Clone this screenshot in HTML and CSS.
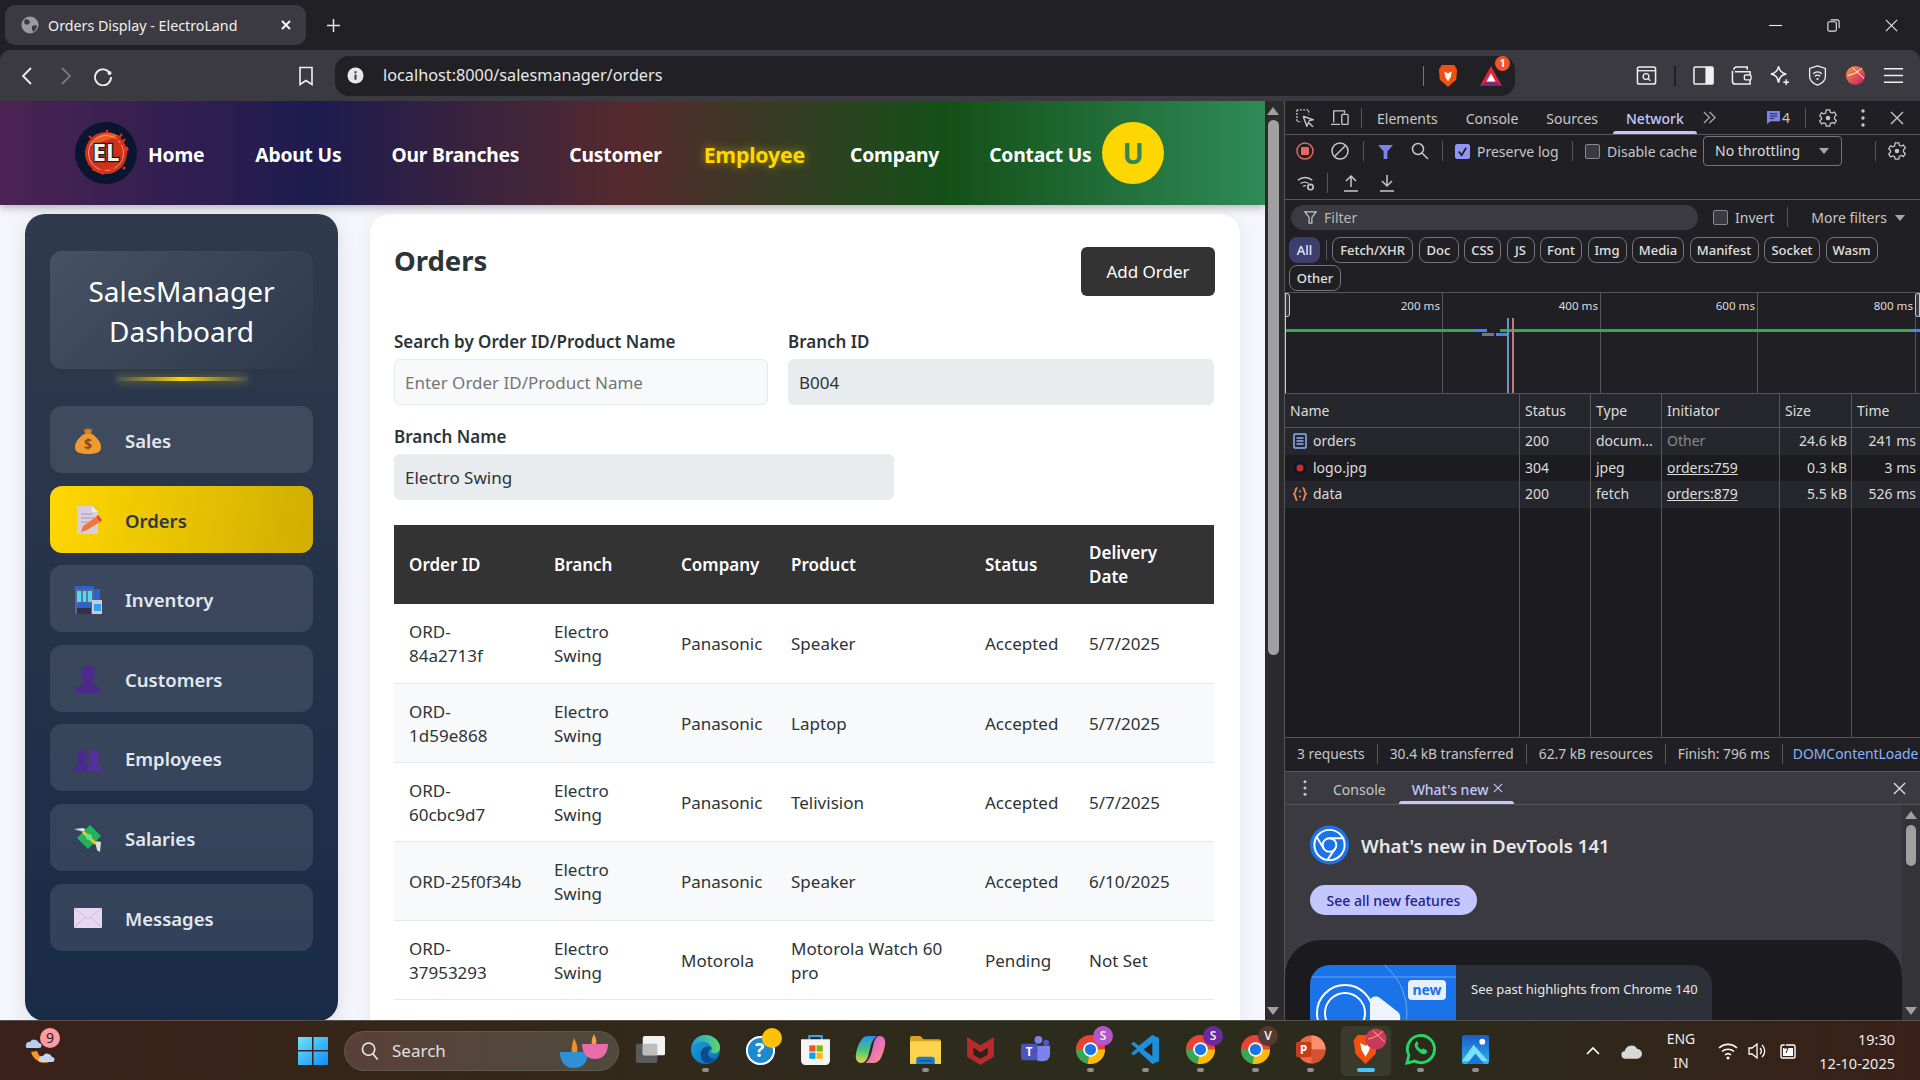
FILE: index.html
```html
<!DOCTYPE html>
<html lang="en">
<head>
    <meta charset="UTF-8">
    <title>Orders Display - ElectroLand</title>
    <link rel="stylesheet" href="styles.css">
</head>
<body>
<div class="tabstrip">
    <div class="tab">
        <svg class="tab-globe" viewBox="0 0 18 18"><circle cx="9" cy="9" r="8.5" fill="#9a9aa0"/><path d="M4 3l4 1 1 3-3 2-3-2zM11 10l4-1 1 2-3 5-2-2z" fill="#3a3a40"/></svg>
        <span class="tab-title">Orders Display - ElectroLand</span>
        <svg class="tab-close" viewBox="0 0 12 12"><path d="M2 2l8 8M10 2l-8 8" stroke="#fff" stroke-width="1.8"/></svg>
    </div>
    <svg class="new-tab" viewBox="0 0 16 16"><path d="M8 1v14M1 8h14" stroke="#e8e8e8" stroke-width="1.6"/></svg>
    <div class="window-controls">
        <svg viewBox="0 0 16 16"><path d="M1 8h14" stroke="#e8e8e8" stroke-width="1.2"/></svg>
        <svg viewBox="0 0 16 16"><rect x="2" y="4" width="9" height="10" rx="1.5" fill="none" stroke="#e8e8e8" stroke-width="1.2"/><path d="M5 2h7a2 2 0 0 1 2 2v7" fill="none" stroke="#e8e8e8" stroke-width="1.2"/></svg>
        <svg viewBox="0 0 16 16"><path d="M2 2l12 12M14 2L2 14" stroke="#e8e8e8" stroke-width="1.2"/></svg>
    </div>
</div>

<div class="toolbar">
    <button class="tool-btn"><svg viewBox="0 0 20 20"><path d="M14 2L6 10l8 8" fill="none" stroke="#f0f0f0" stroke-width="1.8"/></svg></button>
    <button class="tool-btn"><svg viewBox="0 0 20 20"><path d="M7 2l8 8-8 8" fill="none" stroke="#77777c" stroke-width="1.8"/></svg></button>
    <button class="tool-btn"><svg viewBox="0 0 20 20"><path d="M15.5 5.5A8 8 0 1 0 18 11" fill="none" stroke="#f0f0f0" stroke-width="1.8"/><circle cx="16.5" cy="7" r="2" fill="#f0f0f0"/></svg></button>
    <button class="tool-btn bookmark"><svg viewBox="0 0 20 20"><path d="M4 1.5h12v17l-6-4-6 4z" fill="none" stroke="#f0f0f0" stroke-width="1.6"/></svg></button>
    <div class="address-bar">
        <svg class="info-icon" viewBox="0 0 18 18"><circle cx="9" cy="9" r="8.5" fill="#e8e8ec"/><path d="M9 8v5.5M9 4.5v2" stroke="#333" stroke-width="2"/></svg>
        <span class="url">localhost:8000/salesmanager/orders</span>
        <span class="addr-sep"></span>
        <svg class="shield-icon" viewBox="0 0 22 26"><path d="M4 1h14l3 5-1 11-9 8-9-8L1 6z" fill="#f1500f"/><path d="M7 8l4 2 4-2-1 6-3 5-3-5z" fill="#fff"/></svg>
        <span class="bat-wrap">
            <svg class="bat-icon" viewBox="0 0 26 24"><path d="M13 1l12 22H1z" fill="#e0243a"/><path d="M1 23l6-4h12l6 4z" fill="#662d91"/><path d="M13 9l5 9H8z" fill="#fff"/></svg>
            <span class="bat-badge">1</span>
        </span>
    </div>
    <div class="toolbar-right">
        <svg viewBox="0 0 22 22"><rect x="1.5" y="2" width="19" height="18" rx="2" fill="none" stroke="#f0f0f0" stroke-width="1.6"/><path d="M1.5 6h19" stroke="#f0f0f0" stroke-width="1.4"/><circle cx="10.5" cy="12" r="3" fill="none" stroke="#f0f0f0" stroke-width="1.4"/><path d="M12.5 14l2.5 2.5" stroke="#f0f0f0" stroke-width="1.4"/></svg>
        <span class="toolbar-sep"></span>
        <svg viewBox="0 0 22 22"><rect x="1" y="2" width="20" height="18" rx="1.5" fill="none" stroke="#f0f0f0" stroke-width="1.6"/><rect x="13" y="2" width="8" height="18" fill="#f0f0f0"/></svg>
        <svg viewBox="0 0 22 22"><path d="M3 5a3 3 0 0 1 3-3h11v3M1.5 6v11a3 3 0 0 0 3 3H20V7H4" fill="none" stroke="#f0f0f0" stroke-width="1.6"/><rect x="14" y="10.5" width="7" height="5" rx="1" fill="#3a3a40" stroke="#f0f0f0" stroke-width="1.4"/></svg>
        <svg viewBox="0 0 22 22"><path d="M10 1.5c1 5 3 7 8 8-5 1-7 3-8 9-1-6-3-8-8-9 5-1 7-3 8-8z" fill="none" stroke="#f0f0f0" stroke-width="1.6"/><path d="M18 15v6M15 18h6" stroke="#f0f0f0" stroke-width="1.5"/></svg>
        <svg viewBox="0 0 22 24"><path d="M11 1l9 3v9c0 5-4 8-9 10-5-2-9-5-9-10V4z" fill="none" stroke="#f0f0f0" stroke-width="1.5"/><path d="M6 10a7 7 0 0 1 10 0M8 13a4 4 0 0 1 6 0" fill="none" stroke="#f0f0f0" stroke-width="1.4"/><circle cx="11" cy="16" r="1.2" fill="#f0f0f0"/></svg>
        <svg viewBox="0 0 22 22"><defs><linearGradient id="orb" x1="0" y1="0" x2="1" y2="1"><stop offset="0" stop-color="#f5a044"/><stop offset="1" stop-color="#c8145e"/></linearGradient></defs><circle cx="11" cy="11" r="10" fill="url(#orb)"/><path d="M3 11c6-1 11-4 15-8M8 3l12 11" stroke="#fff" stroke-width="1" fill="none"/></svg>
        <svg viewBox="0 0 22 22"><path d="M1 4h20M1 11h20M1 18h20" stroke="#f0f0f0" stroke-width="1.6"/></svg>
    </div>
</div>

<div class="workspace">
    <div class="page">
        <header class="site-header">
            <div class="site-logo">
                <svg viewBox="0 0 62 62">
                    <circle cx="31" cy="31" r="31" fill="#0a1530"/>
                    <circle cx="31" cy="31" r="21" fill="#d1301a"/>
                    <path d="M14 24a21 21 0 0 1 30-10z" fill="#ef5a22"/>
                    <circle cx="31" cy="31" r="17.5" fill="none" stroke="#e8a080" stroke-width="1"/>
                    <path d="M17 47l12 5M24 49l12-3M36 48l11-12M47 12l-6 7M50 17l-5 6M14 14l5 4" stroke="#e03018" stroke-width="2"/>
                    <circle cx="51" cy="27" r="2.5" fill="#e8341c"/>
                    <circle cx="49" cy="46" r="1.5" fill="#e8341c"/>
                    <circle cx="32" cy="9" r="1.2" fill="#e8341c"/>
                    <text x="31" y="39" text-anchor="middle" class="logo-text">EL</text>
                </svg>
            </div>
            <nav class="site-nav">
                <a class="nav-home">Home</a>
                <a class="nav-about">About Us</a>
                <a class="nav-branches">Our Branches</a>
                <a class="nav-customer">Customer</a>
                <a class="nav-employee">Employee</a>
                <a class="nav-company">Company</a>
                <a class="nav-contact">Contact Us</a>
            </nav>
            <div class="avatar">U</div>
        </header>

        <div class="page-body">
            <aside class="sidebar">
                <div class="sidebar-title">SalesManager Dashboard</div>
                <div class="sidebar-glow"></div>
                <ul class="side-menu">
                    <li class="side-item">
                        <svg class="side-icon" viewBox="0 0 28 28"><path d="M10 1l2 2 2-2 2 2 2-2-1 6h-6z" fill="#d9822b"/><path d="M10 7h8c6 4 9 9 9 13 0 5-4 7-13 7S1 25 1 20c0-4 3-9 9-13z" fill="#ef9a2e"/><text x="14" y="22" text-anchor="middle" class="bag-text">$</text></svg>
                        <span>Sales</span>
                    </li>
                    <li class="side-item active">
                        <svg class="side-icon" viewBox="0 0 28 28"><path d="M3 0h15l6 6v22H3z" fill="#d9cde0"/><path d="M18 0l6 6h-6z" fill="#f0e8f4"/><path d="M7 8h11M7 12h13M7 16h8" stroke="#a59bb0" stroke-width="1.2"/><path d="M7 26l2-6 13-9 4 5-13 8z" fill="#f2753a"/><path d="M22 11l4 5 2-2-4-5z" fill="#e2453a"/></svg>
                        <span>Orders</span>
                    </li>
                    <li class="side-item">
                        <svg class="side-icon" viewBox="0 0 28 28"><rect x="1" y="1" width="19" height="27" fill="#5a6890"/><rect x="1" y="0" width="19" height="3" fill="#2a64c8"/><rect x="3" y="5" width="15" height="11" fill="#58d8f0"/><path d="M8 5v11M13 5v11" stroke="#4a5a80" stroke-width="1.4"/><rect x="20" y="3" width="6" height="12" fill="#2a64c8"/><rect x="18" y="14" width="10" height="14" fill="#c8ccd8"/><rect x="20" y="18" width="7" height="7" fill="#35a0f0"/><path d="M2 22a8 6 0 0 1 16 0z" fill="#2a64c8"/><rect x="3" y="22" width="14" height="6" fill="#35304a"/></svg>
                        <span>Inventory</span>
                    </li>
                    <li class="side-item">
                        <svg class="side-icon" viewBox="0 0 28 28"><ellipse cx="14" cy="9" rx="7" ry="9" fill="#4c2a8c"/><path d="M10 16h8l1 3c5 2 8 5 9 9H0c1-4 4-7 9-9z" fill="#4c2a8c"/></svg>
                        <span>Customers</span>
                    </li>
                    <li class="side-item">
                        <svg class="side-icon" viewBox="0 0 28 28"><ellipse cx="8" cy="11" rx="5" ry="7" fill="#4c2a8c"/><path d="M5 17h6l1 2c2 1 3 3 3 5v2H0v-2c0-2 2-4 4-5z" fill="#4c2a8c"/><ellipse cx="20" cy="11" rx="5" ry="7" fill="#56309a"/><path d="M17 17h6l1 2c2 1 4 3 4 5v2H13v-2c0-2 1-4 3-5z" fill="#56309a"/></svg>
                        <span>Employees</span>
                    </li>
                    <li class="side-item">
                        <svg class="side-icon" viewBox="0 0 28 28"><path d="M0 5l10-1 3 5zM27 18l-1 10-3-2-2-9z" fill="#dde0e4"/><path d="M3 14L16 1l11 11-13 13z" fill="#22b45a"/><path d="M9 8l13 12" stroke="#f3c33a" stroke-width="3"/><circle cx="15" cy="13" r="3" fill="#6fdc8f"/></svg>
                        <span>Salaries</span>
                    </li>
                    <li class="side-item">
                        <svg class="side-icon" viewBox="0 0 28 20"><rect width="28" height="20" fill="#e6d8f0"/><path d="M0 0l14 11L28 0M0 20l11-11M28 20L17 9" fill="none" stroke="#cbb8d8" stroke-width="1"/></svg>
                        <span>Messages</span>
                    </li>
                </ul>
            </aside>

            <main class="content-card">
                <div class="content-head">
                    <h2>Orders</h2>
                    <button class="add-order">Add Order</button>
                </div>
                <div class="filters">
                    <div class="field field-search">
                        <label>Search by Order ID/Product Name</label>
                        <input class="text-input" placeholder="Enter Order ID/Product Name">
                    </div>
                    <div class="field field-branch">
                        <label>Branch ID</label>
                        <input class="text-input readonly" value="B004" readonly>
                    </div>
                    <div class="field field-name">
                        <label>Branch Name</label>
                        <input class="text-input readonly" value="Electro Swing" readonly>
                    </div>
                </div>
                <table class="orders-table">
                    <colgroup>
                        <col class="c-id"><col class="c-branch"><col class="c-company"><col class="c-product"><col class="c-status"><col class="c-date">
                    </colgroup>
                    <thead>
                        <tr><th>Order ID</th><th>Branch</th><th>Company</th><th>Product</th><th>Status</th><th>Delivery Date</th></tr>
                    </thead>
                    <tbody>
                        <tr><td>ORD-<br>84a2713f</td><td>Electro<br>Swing</td><td>Panasonic</td><td>Speaker</td><td>Accepted</td><td>5/7/2025</td></tr>
                        <tr><td>ORD-<br>1d59e868</td><td>Electro<br>Swing</td><td>Panasonic</td><td>Laptop</td><td>Accepted</td><td>5/7/2025</td></tr>
                        <tr><td>ORD-<br>60cbc9d7</td><td>Electro<br>Swing</td><td>Panasonic</td><td>Telivision</td><td>Accepted</td><td>5/7/2025</td></tr>
                        <tr><td>ORD-25f0f34b</td><td>Electro<br>Swing</td><td>Panasonic</td><td>Speaker</td><td>Accepted</td><td>6/10/2025</td></tr>
                        <tr><td>ORD-<br>37953293</td><td>Electro<br>Swing</td><td>Motorola</td><td>Motorola Watch 60<br>pro</td><td>Pending</td><td>Not Set</td></tr>
                    </tbody>
                </table>
            </main>
        </div>
    </div>

    <div class="page-scroll">
        <span class="arrow-up"></span>
        <span class="page-thumb"></span>
        <span class="arrow-down"></span>
    </div>

    <section class="devtools">
        <div class="dt-tabs">
            <svg class="dt-ic" viewBox="0 0 20 20"><path d="M1 1h13v5M1 1v13h5" fill="none" stroke="#c7c7c7" stroke-width="1.6" stroke-dasharray="2 1.5"/><path d="M8 8l4 11 2-4 5 5M8 8l11 4-5 1" fill="none" stroke="#c7c7c7" stroke-width="1.6"/></svg>
            <svg class="dt-ic" viewBox="0 0 20 20"><path d="M3 15V2h12v3M0 17h10" fill="none" stroke="#c7c7c7" stroke-width="1.5"/><rect x="12" y="6" width="7" height="11" rx="1" fill="none" stroke="#c7c7c7" stroke-width="1.5"/></svg>
            <span class="dt-sep"></span>
            <span class="dt-tab first">Elements</span>
            <span class="dt-tab">Console</span>
            <span class="dt-tab">Sources</span>
            <span class="dt-tab selected">Network</span>
            <svg class="dt-more" viewBox="0 0 16 14"><path d="M2 1l6 6-6 6M8 1l6 6-6 6" fill="none" stroke="#a8a8a8" stroke-width="1.4"/></svg>
            <span class="dt-tabs-right">
                <svg class="dt-chat" viewBox="0 0 14 14"><path d="M0 0h14v11H4l-4 3z" fill="#7c82f0"/><path d="M3 3h8M3 5.5h8M3 8h5" stroke="#202024" stroke-width="1"/></svg>
                <span class="dt-count">4</span>
                <span class="dt-sep"></span>
                <svg class="dt-ic gear" viewBox="0 0 20 20"><path d="M8 1h4l.6 2.6 2.2 1 2.4-1.2 2 3.4-2 1.8v2.4l2 1.8-2 3.4-2.4-1.2-2.2 1L12 19H8l-.6-2.6-2.2-1-2.4 1.2-2-3.4 2-1.8V9.4l-2-1.8 2-3.4 2.4 1.2 2.2-1z" fill="none" stroke="#c7c7c7" stroke-width="1.4"/><circle cx="10" cy="10" r="2.5" fill="#c7c7c7"/></svg>
                <svg class="dt-ic dots" viewBox="0 0 4 18"><circle cx="2" cy="2" r="1.7" fill="#c7c7c7"/><circle cx="2" cy="9" r="1.7" fill="#c7c7c7"/><circle cx="2" cy="16" r="1.7" fill="#c7c7c7"/></svg>
                <svg class="dt-ic close" viewBox="0 0 14 14"><path d="M1 1l12 12M13 1L1 13" stroke="#c7c7c7" stroke-width="1.4"/></svg>
            </span>
        </div>

        <div class="dt-row dt-controls">
            <svg class="dt-ic rec" viewBox="0 0 18 18"><circle cx="9" cy="9" r="8" fill="none" stroke="#e46962" stroke-width="1.5"/><rect x="5" y="5" width="8" height="8" rx="1" fill="#e46962"/></svg>
            <svg class="dt-ic" viewBox="0 0 18 18"><circle cx="9" cy="9" r="8" fill="none" stroke="#c7c7c7" stroke-width="1.5"/><path d="M3.5 14.5l11-11" stroke="#c7c7c7" stroke-width="1.5"/></svg>
            <span class="dt-sep"></span>
            <svg class="dt-ic funnel" viewBox="0 0 16 16"><path d="M0 1h16l-6 7v8H6V8z" fill="#7c82f0"/></svg>
            <svg class="dt-ic lens" viewBox="0 0 18 18"><circle cx="7" cy="7" r="5.5" fill="none" stroke="#c7c7c7" stroke-width="1.5"/><path d="M11 11l6 6" stroke="#c7c7c7" stroke-width="1.5"/></svg>
            <span class="dt-sep"></span>
            <label class="dt-check"><span class="box checked"><svg viewBox="0 0 14 14"><path d="M3 7l3 4 5-8" fill="none" stroke="#202024" stroke-width="2"/></svg></span>Preserve log</label>
            <span class="dt-sep"></span>
            <label class="dt-check"><span class="box"></span>Disable cache</label>
            <span class="dt-select">No throttling<span class="caret"></span></span>
            <span class="dt-sep sep-end"></span>
            <svg class="dt-ic gear" viewBox="0 0 20 20"><path d="M8 1h4l.6 2.6 2.2 1 2.4-1.2 2 3.4-2 1.8v2.4l2 1.8-2 3.4-2.4-1.2-2.2 1L12 19H8l-.6-2.6-2.2-1-2.4 1.2-2-3.4 2-1.8V9.4l-2-1.8 2-3.4 2.4 1.2 2.2-1z" fill="none" stroke="#c7c7c7" stroke-width="1.4"/><circle cx="10" cy="10" r="2.5" fill="#c7c7c7"/></svg>
        </div>

        <div class="dt-row dt-import">
            <svg class="dt-ic" viewBox="0 0 20 18"><path d="M1 6a12 12 0 0 1 16 0M4 9.5a8 8 0 0 1 9 0M7 13a3 3 0 0 1 3-1" fill="none" stroke="#c7c7c7" stroke-width="1.5"/><circle cx="15" cy="13.5" r="3" fill="none" stroke="#c7c7c7" stroke-width="1.8"/></svg>
            <span class="dt-sep"></span>
            <svg class="dt-ic" viewBox="0 0 16 18"><path d="M8 13V2M3 7l5-5 5 5M1 17h14" fill="none" stroke="#c7c7c7" stroke-width="1.5"/></svg>
            <svg class="dt-ic" viewBox="0 0 16 18"><path d="M8 1v11M3 7l5 5 5-5M1 17h14" fill="none" stroke="#c7c7c7" stroke-width="1.5"/></svg>
        </div>

        <div class="dt-filter">
            <div class="filter-input">
                <svg viewBox="0 0 14 14"><path d="M1 1h12L8.5 7v6h-3V7z" fill="none" stroke="#c7c7c7" stroke-width="1.3"/></svg>
                <span>Filter</span>
            </div>
            <label class="dt-check invert"><span class="box"></span>Invert</label>
            <span class="dt-sep"></span>
            <span class="more-filters">More filters<span class="caret small"></span></span>
        </div>

        <div class="chips">
            <span class="chip on">All</span>
            <span class="chip-sep"></span>
            <span class="chip w81">Fetch/XHR</span>
            <span class="chip w40">Doc</span>
            <span class="chip w37">CSS</span>
            <span class="chip w28">JS</span>
            <span class="chip w42">Font</span>
            <span class="chip w39">Img</span>
            <span class="chip w52">Media</span>
            <span class="chip w69">Manifest</span>
            <span class="chip w56">Socket</span>
            <span class="chip w52">Wasm</span>
            <span class="chip w52">Other</span>
        </div>

        <div class="overview">
            <span class="grid-line g1"><em>200 ms</em></span>
            <span class="grid-line g2"><em>400 ms</em></span>
            <span class="grid-line g3"><em>600 ms</em></span>
            <span class="grid-line g4"><em>800 ms</em></span>
            <span class="mark m-green m1"></span>
            <span class="mark m-blue m2"></span>
            <span class="mark m-grey m3"></span>
            <span class="mark m-blue m4"></span>
            <span class="mark m-green m5"></span>
            <span class="mark m-blue m6"></span>
            <span class="v-line dcl"></span>
            <span class="v-line load"></span>
            <span class="handle h-left"></span>
            <span class="handle h-right"></span>
            <span class="edge-line"></span>
        </div>

        <div class="net-table">
            <div class="net-row net-head"><span>Name</span><span>Status</span><span>Type</span><span>Initiator</span><span>Size</span><span>Time</span></div>
            <div class="net-row light">
                <span class="name"><svg viewBox="0 0 14 16"><rect x="1" y="1" width="12" height="14" rx="1" fill="none" stroke="#8ab4f8" stroke-width="1.5"/><path d="M3.5 5h7M3.5 8h7M3.5 11h7" stroke="#8ab4f8" stroke-width="1.3"/></svg>orders</span>
                <span>200</span><span>docum...</span><span class="muted">Other</span><span class="num">24.6 kB</span><span class="num">241 ms</span>
            </div>
            <div class="net-row dark">
                <span class="name"><svg viewBox="0 0 14 16"><rect x="1" y="2" width="12" height="12" fill="#0b1630"/><circle cx="7" cy="8" r="3.5" fill="#c8301c"/></svg>logo.jpg</span>
                <span>304</span><span>jpeg</span><span class="link">orders:759</span><span class="num">0.3 kB</span><span class="num">3 ms</span>
            </div>
            <div class="net-row light">
                <span class="name"><svg viewBox="0 0 16 16"><path d="M5 1C2 1 4 7 1 8c3 1 1 7 4 7M11 1c3 0 1 6 4 7-3 1-1 7-4 7" fill="none" stroke="#f28b54" stroke-width="2"/><path d="M8 4v2M8 10v2" stroke="#f28b54" stroke-width="2"/></svg>data</span>
                <span>200</span><span>fetch</span><span class="link">orders:879</span><span class="num">5.5 kB</span><span class="num">526 ms</span>
            </div>
            <div class="net-row filler"><span></span><span></span><span></span><span></span><span></span><span></span></div>
        </div>

        <div class="dt-status">
            <span>3 requests</span><span>30.4 kB transferred</span><span>62.7 kB resources</span><span>Finish: 796 ms</span><span class="dcl-text">DOMContentLoade</span>
        </div>

        <div class="drawer-tabs">
            <svg class="dots-v" viewBox="0 0 4 18"><circle cx="2" cy="2" r="1.7" fill="#c7c7c7"/><circle cx="2" cy="9" r="1.7" fill="#c7c7c7"/><circle cx="2" cy="16" r="1.7" fill="#c7c7c7"/></svg>
            <span class="drawer-tab">Console</span>
            <span class="drawer-tab selected">What's new<svg viewBox="0 0 12 12"><path d="M1 1l10 10M11 1L1 11" stroke="#c4c7ff" stroke-width="1.3"/></svg></span>
            <svg class="drawer-close" viewBox="0 0 14 14"><path d="M1 1l12 12M13 1L1 13" stroke="#e0e0e0" stroke-width="1.4"/></svg>
        </div>

        <div class="drawer-body">
            <div class="whatsnew">
                <div class="wn-head">
                    <svg viewBox="0 0 40 40"><circle cx="20" cy="20" r="20" fill="#1a73e8"/><circle cx="20" cy="20" r="15.5" fill="none" stroke="#fff" stroke-width="2"/><circle cx="20" cy="20" r="7" fill="none" stroke="#fff" stroke-width="2"/><path d="M20 13h15M14 23.5L6.5 11M26 23.5L18 35" stroke="#fff" stroke-width="2"/></svg>
                    <span>What's new in DevTools 141</span>
                </div>
                <button class="wn-btn">See all new features</button>
                <div class="wn-panel">
                    <div class="wn-card">
                        <div class="wn-thumb">
                            <svg viewBox="0 0 146 60"><circle cx="35" cy="48" r="62" fill="none" stroke="#6ea8f0" stroke-width="1"/><circle cx="35" cy="48" r="28" fill="none" stroke="#fff" stroke-width="2"/><circle cx="35" cy="48" r="20" fill="none" stroke="#fff" stroke-width="2"/><path d="M0 12h146" stroke="#6ea8f0"/><path d="M60 36c0-4 6-6 10-3l18 14c3 3 3 8 0 13H60z" fill="#eef3fc"/></svg>
                            <span class="new-badge">new</span>
                        </div>
                        <span class="wn-card-text">See past highlights from Chrome 140</span>
                    </div>
                </div>
            </div>
            <div class="drawer-scroll">
                <span class="arrow-up"></span>
                <span class="drawer-thumb"></span>
                <span class="arrow-down"></span>
            </div>
        </div>
    </section>
</div>

<footer class="taskbar">
    <div class="weather">
        <svg viewBox="0 0 32 36"><path d="M6 20a14 14 0 0 0 22 8c-9 1-14-3-16-9z" fill="#f39a1f"/><path d="M1 13a3 3 0 0 1 4-3 5 5 0 0 1 9 1 2.5 2.5 0 0 1 0 5H3a2 2 0 0 1-2-3z" fill="#b9cdf0"/><path d="M14 27a3 3 0 0 1 4-3 5 5 0 0 1 9 1 2.5 2.5 0 0 1 0 5H16a2 2 0 0 1-2-3z" fill="#c4d6f4"/></svg>
        <span class="weather-badge">9</span>
    </div>
    <div class="task-center">
        <div class="task-slot start">
            <svg viewBox="0 0 30 30"><defs><linearGradient id="win" x1="0" y1="0" x2="1" y2="1"><stop offset="0" stop-color="#6fe4fb"/><stop offset="1" stop-color="#0f8cf5"/></linearGradient></defs><path d="M0 1h14v13H0zM15.5 1H30v13H15.5zM0 15.5h14V29H0zM15.5 15.5H30V29H15.5z" fill="url(#win)"/></svg>
        </div>
        <div class="task-search">
            <svg class="search-glass" viewBox="0 0 20 20"><circle cx="8" cy="8" r="6.5" fill="none" stroke="#f0f0f0" stroke-width="1.6"/><path d="M12.5 13l5 6" stroke="#f0f0f0" stroke-width="1.6"/></svg>
            <span>Search</span>
            <svg class="search-art" viewBox="0 0 56 34"><path d="M20 4c3 6 4 10 3 15h-5c-1-5 0-9 2-15z" fill="#f0902a"/><path d="M6 18h28c0 10-5 16-14 16S6 28 6 18z" fill="#2f8fd8"/><path d="M40 0c2 4 3 7 2 10h-4c-1-3 0-6 2-10z" fill="#f0a040"/><path d="M28 10h26c0 9-5 15-13 15s-13-6-13-15z" fill="#e86ca8"/></svg>
        </div>
        <div class="task-slot">
            <svg viewBox="0 0 32 30"><rect x="1" y="9" width="22" height="20" rx="2" fill="#5a5a5a"/><rect x="8" y="1" width="23" height="20" rx="2" fill="#f2f2f2"/><rect x="8" y="9" width="15" height="12" rx="1" fill="#bdbdbd"/></svg>
            <i class="dot-off"></i>
        </div>
        <div class="task-slot">
            <svg viewBox="0 0 32 32"><defs><linearGradient id="edge" x1="0" y1="0" x2="1" y2="1"><stop offset="0" stop-color="#1ba0dc"/><stop offset="1" stop-color="#0c6cc0"/></linearGradient><linearGradient id="edgetop" x1="0" y1="0" x2="1" y2="0"><stop offset="0" stop-color="#2a9fd8"/><stop offset="1" stop-color="#5cd66a"/></linearGradient></defs><circle cx="16" cy="16" r="15" fill="url(#edge)"/><path d="M2 12C4 5 10 1 16 1c8 0 15 6 15 13 0 4-3 6-6 6-2 0-4-1-4-2 2-1 2-3 1-5-2-3-5-5-9-5C8 8 4 10 2 12z" fill="url(#edgetop)"/><path d="M11 21c0-5 4-8 8-8 2 0 3 1 3 2-3 1-4 4-3 7s6 5 9 2c-3 4-7 6-11 6-3 0-6-4-6-9z" fill="#0c4a8f"/></svg>
            <i class="dot"></i>
        </div>
        <div class="task-slot">
            <div class="help-wrap">
                <svg viewBox="0 0 32 32"><circle cx="16" cy="17" r="15" fill="#1b8ad1"/><circle cx="16" cy="17" r="14" fill="none" stroke="#fff" stroke-width="2"/><text x="15" y="24" text-anchor="middle" class="help-text">?</text></svg>
                <span class="help-badge"></span>
            </div>
            <i class="dot-off"></i>
        </div>
        <div class="task-slot">
            <svg viewBox="0 0 30 30"><path d="M9 7V2h12v5" fill="none" stroke="#3aa0e8" stroke-width="2"/><path d="M1 5h28v21a4 4 0 0 1-4 4H5a4 4 0 0 1-4-4z" fill="#f4f4f4"/><rect x="9" y="11" width="6" height="6" fill="#f25022"/><rect x="16" y="11" width="6" height="6" fill="#7fba00"/><rect x="9" y="18" width="6" height="6" fill="#00a4ef"/><rect x="16" y="18" width="6" height="6" fill="#ffb900"/></svg>
            <i class="dot-off"></i>
        </div>
        <div class="task-slot">
            <svg viewBox="0 0 30 28"><defs><linearGradient id="copa" x1="0" y1="0" x2="0" y2="1"><stop offset="0" stop-color="#2a8ff0"/><stop offset=".55" stop-color="#48c878"/><stop offset="1" stop-color="#f0d040"/></linearGradient><linearGradient id="copb" x1="0" y1="0" x2="1" y2="1"><stop offset="0" stop-color="#c060e0"/><stop offset=".6" stop-color="#f078b0"/><stop offset="1" stop-color="#f4a050"/></linearGradient></defs><path d="M12 1h9c-3 2-5 6-6 10l-2 8c-1 5-4 8-7 8-4 0-6-4-5-9 1-6 5-17 11-17z" fill="url(#copa)"/><path d="M19 27h-9c3-2 5-6 6-10l2-8c1-5 3-8 6-8 4 0 6 4 5 9-1 6-4 17-10 17z" fill="url(#copb)"/></svg>
            <i class="dot-off"></i>
        </div>
        <div class="task-slot">
            <svg viewBox="0 0 30 28"><path d="M0 3a2 2 0 0 1 2-2h8l3 3h15a2 2 0 0 1 2 2v4H0z" fill="#e0a020"/><path d="M0 6h30v22H0z" fill="#fbd34d"/><path d="M6 28v-4a3 3 0 0 1 3-3h12a3 3 0 0 1 3 3v4z" fill="#1d7ec8"/><path d="M9 25h12" stroke="#0c4a8f" stroke-width="1"/></svg>
            <i class="dot"></i>
        </div>
        <div class="task-slot">
            <svg viewBox="0 0 28 30"><path d="M1 3l13 8 13-8v19l-13 8-13-8z" fill="#b52a2a"/><path d="M7 13l7 5 7-5v7l-7 4-7-4z" fill="#2a2318"/></svg>
            <i class="dot-off"></i>
        </div>
        <div class="task-slot">
            <svg viewBox="0 0 32 30"><circle cx="19" cy="5" r="4" fill="#7b83eb"/><circle cx="27" cy="8" r="3" fill="#5059c9"/><path d="M14 11h17v9a7 7 0 0 1-7 7h-3a7 7 0 0 1-7-7z" fill="#7b83eb"/><rect x="1" y="9" width="17" height="17" rx="2" fill="#4b53bc"/><text x="9.5" y="22" text-anchor="middle" class="t-text">T</text></svg>
            <i class="dot-off"></i>
        </div>
        <div class="task-slot">
            <div class="chrome-wrap">
                <svg viewBox="0 0 32 32"><circle cx="16" cy="16" r="15" fill="#e94335"/><path d="M16 16L1 16a15 15 0 0 0 12 14.7z" fill="#34a853"/><path d="M16 16l-3 14.7A15 15 0 0 0 31 16z" fill="#fbbc04"/><circle cx="16" cy="16" r="7.5" fill="#fff"/><circle cx="16" cy="16" r="5.8" fill="#1a73e8"/></svg>
                <span class="profile p-pink">S</span>
            </div>
            <i class="dot"></i>
        </div>
        <div class="task-slot">
            <svg viewBox="0 0 30 32"><path d="M22 1l7 3v24l-7 3L8 18l-5 4-3-2 6-5-6-5 3-2 5 4z" fill="#1f8fdc"/><path d="M22 9v14l-9-7z" fill="#2a2318"/></svg>
            <i class="dot"></i>
        </div>
        <div class="task-slot">
            <div class="chrome-wrap">
                <svg viewBox="0 0 32 32"><circle cx="16" cy="16" r="15" fill="#e94335"/><path d="M16 16L1 16a15 15 0 0 0 12 14.7z" fill="#34a853"/><path d="M16 16l-3 14.7A15 15 0 0 0 31 16z" fill="#fbbc04"/><circle cx="16" cy="16" r="7.5" fill="#fff"/><circle cx="16" cy="16" r="5.8" fill="#1a73e8"/></svg>
                <span class="profile p-purple">S</span>
            </div>
            <i class="dot"></i>
        </div>
        <div class="task-slot">
            <div class="chrome-wrap">
                <svg viewBox="0 0 32 32"><circle cx="16" cy="16" r="15" fill="#e94335"/><path d="M16 16L1 16a15 15 0 0 0 12 14.7z" fill="#34a853"/><path d="M16 16l-3 14.7A15 15 0 0 0 31 16z" fill="#fbbc04"/><circle cx="16" cy="16" r="7.5" fill="#fff"/><circle cx="16" cy="16" r="5.8" fill="#1a73e8"/></svg>
                <span class="profile p-brown">V</span>
            </div>
            <i class="dot"></i>
        </div>
        <div class="task-slot">
            <svg viewBox="0 0 32 32"><circle cx="17" cy="16" r="14.5" fill="#ed6c47"/><path d="M17 1.5a14.5 14.5 0 0 1 14.5 14.5H17z" fill="#ff8f6b"/><path d="M17 30.5A14.5 14.5 0 0 0 31.5 16H17z" fill="#d35230"/><rect x="1" y="8" width="16" height="16" rx="2" fill="#c43e1c"/><text x="9" y="21" text-anchor="middle" class="t-text">P</text></svg>
            <i class="dot"></i>
        </div>
        <div class="task-slot active-app">
            <div class="chrome-wrap">
                <svg viewBox="0 0 30 34"><path d="M6 1h18l4 6-2 15-11 11L4 22 2 7z" fill="#f1500f"/><path d="M9 10l6 3 6-3-2 8-4 7-4-7z" fill="#fff"/></svg>
                <svg class="brave-orb" viewBox="0 0 22 22"><circle cx="11" cy="11" r="10.5" fill="#c93a5a"/><path d="M3 11c6-1 11-4 15-8M8 3l12 11" stroke="#f4b090" stroke-width="1" fill="none"/></svg>
            </div>
            <i class="dot-active"></i>
        </div>
        <div class="task-slot">
            <svg viewBox="0 0 32 32"><path d="M2 30l2-8a14 14 0 1 1 6 6z" fill="none" stroke="#25d366" stroke-width="3"/><path d="M11 9c-2 2-1 5 2 8s6 5 9 3l1-3-4-2-2 1c-2-1-3-2-4-4l1-2-2-3z" fill="#25d366"/></svg>
            <i class="dot"></i>
        </div>
        <div class="task-slot">
            <svg viewBox="0 0 30 32"><defs><linearGradient id="pho" x1="0" y1="0" x2="0" y2="1"><stop offset="0" stop-color="#1e5ac8"/><stop offset="1" stop-color="#2ab4f0"/></linearGradient></defs><rect x="1" y="1" width="28" height="30" rx="3" fill="url(#pho)"/><circle cx="22" cy="8" r="3" fill="#fff"/><path d="M1 28l12-17 15 17z" fill="#7ce0f8"/><path d="M6 31l9-11 9 11z" fill="#1678d8"/></svg>
            <i class="dot"></i>
        </div>
    </div>
    <div class="tray">
        <svg class="tray-chev" viewBox="0 0 14 9"><path d="M1 8l6-6 6 6" fill="none" stroke="#fff" stroke-width="1.6"/></svg>
        <svg class="tray-cloud" viewBox="0 0 22 18"><path d="M5 17a4 4 0 0 1-1-8 7 7 0 0 1 13-2 5 5 0 0 1 0 10z" fill="#d8d8d8"/></svg>
        <div class="tray-lang">ENG<br>IN</div>
        <svg class="tray-ic" viewBox="0 0 20 18"><path d="M1 6a13 13 0 0 1 18 0M4 9.5a9 9 0 0 1 12 0M7 13a4.5 4.5 0 0 1 6 0" fill="none" stroke="#fff" stroke-width="1.6"/><circle cx="10" cy="16" r="1.5" fill="#fff"/></svg>
        <svg class="tray-ic" viewBox="0 0 20 18"><path d="M1 6h3l5-4v14l-5-4H1z" fill="none" stroke="#fff" stroke-width="1.3"/><path d="M12 6a4 4 0 0 1 0 6M14 3a8 8 0 0 1 0 12" fill="none" stroke="#fff" stroke-width="1.3"/></svg>
        <svg class="tray-ic" viewBox="0 0 20 18"><rect x="3" y="3" width="14" height="13" rx="1.5" fill="none" stroke="#fff" stroke-width="1.4"/><rect x="5" y="6" width="10" height="8" fill="#fff"/><path d="M8 1l-2 5h4l-2 5" stroke="#222" stroke-width="1" fill="none"/></svg>
        <div class="tray-clock">19:30<br>12-10-2025</div>
    </div>
</footer>
</body>
</html>
```

FILE: styles.css
```css
* {
    box-sizing: border-box;
}

html, body {
    margin: 0;
    padding: 0;
    width: 1920px;
    height: 1080px;
    overflow: hidden;
    font-family: 'Noto Sans', 'Open Sans', sans-serif;
    background-color: #202025;
    color: #e8e8e8;
}

svg {
    display: block;
    flex-shrink: 0;
}

/* browser chrome */
.tabstrip {
    height: 50px;
    display: flex;
    align-items: center;
    background-color: #202025;
    padding: 0 0 0 5px;
}

.tab {
    width: 301px;
    height: 40px;
    padding: 0 14px 0 16px;
    display: flex;
    align-items: center;
    background-color: #3a3a40;
    border-radius: 10px;
}

.tab-globe {
    width: 18px;
    height: 18px;
}

.tab-title {
    margin-left: 9px;
    flex-grow: 1;
    font-size: 14.25px;
    color: #f0f0f0;
    white-space: nowrap;
}

.tab-close {
    width: 12px;
    height: 12px;
}

.new-tab {
    width: 15px;
    height: 15px;
    margin-left: 20px;
}

.window-controls {
    margin-left: auto;
    display: flex;
    align-items: center;
    gap: 43px;
    padding-right: 21px;
}

.window-controls svg {
    width: 15px;
    height: 15px;
}

.toolbar {
    height: 51px;
    display: flex;
    align-items: center;
    padding-left: 8px;
    background-color: #3a3a40;
    border-radius: 10px 10px 0 0;
}

.tool-btn {
    width: 38px;
    height: 38px;
    padding: 0;
    border: none;
    background: none;
    display: flex;
    align-items: center;
    justify-content: center;
}

.tool-btn svg {
    width: 20px;
    height: 20px;
}

.bookmark {
    margin-left: 165px;
}

.address-bar {
    width: 1180px;
    height: 40px;
    margin-left: 10px;
    padding: 0 0 0 12px;
    display: flex;
    align-items: center;
    background-color: #202025;
    border-radius: 14px;
}

.info-icon {
    width: 17px;
    height: 17px;
}

.url {
    margin-left: 19px;
    padding-bottom: 2px;
    font-size: 16.25px;
    color: #e8e8e8;
    flex-grow: 1;
}

.addr-sep {
    width: 1px;
    height: 20px;
    background-color: #77777c;
}

.shield-icon {
    width: 20px;
    height: 24px;
    margin-left: 14px;
}

.bat-wrap {
    position: relative;
    margin: 0 12px 0 21px;
}

.bat-icon {
    width: 24px;
    height: 22px;
}

.bat-badge {
    position: absolute;
    top: -9px;
    right: -7px;
    width: 15px;
    height: 15px;
    border-radius: 50%;
    background-color: #f1542c;
    color: #fff;
    font-size: 10px;
    font-weight: 700;
    line-height: 15px;
    text-align: center;
}

.toolbar-right {
    margin-left: auto;
    padding-right: 16px;
    display: flex;
    align-items: center;
    gap: 17px;
}

.toolbar-right svg {
    width: 21px;
    height: 21px;
}

.toolbar-sep {
    width: 2px;
    height: 20px;
    background-color: #202025;
}

/* layout below the chrome */
.workspace {
    height: 919px;
    display: flex;
}

.page {
    width: 1265px;
    height: 919px;
    overflow: hidden;
    background-color: #f4f6fb;
    color: #333;
}

.site-header {
    height: 104px;
    display: flex;
    align-items: center;
    padding-left: 75px;
    background: linear-gradient(90deg, #4b2353 0%, #1e1b4f 25%, #552a2d 50%, #145018 75%, #2e8b57 100%);
    box-shadow: 0 3px 8px rgba(0, 0, 0, 0.25);
    position: relative;
}

.site-logo svg {
    width: 62px;
    height: 62px;
}

.logo-text {
    font-family: 'Noto Sans', sans-serif;
    font-size: 24px;
    font-weight: 700;
    fill: #f2f2e8;
    stroke: #10202c;
    stroke-width: 2.5px;
    paint-order: stroke;
}

.bag-text {
    font-family: 'Noto Sans', sans-serif;
    font-size: 14px;
    font-weight: 700;
    fill: #8a4a10;
}

.help-text {
    font-family: 'Noto Sans', sans-serif;
    font-size: 20px;
    font-weight: 700;
    fill: #fff;
}

.t-text {
    font-family: 'Noto Sans', sans-serif;
    font-size: 12px;
    font-weight: 700;
    fill: #fff;
}

.site-nav {
    display: flex;
    align-items: center;
    margin-left: 11px;
    padding-top: 3px;
}

.site-nav a {
    font-size: 19.3px;
    font-weight: 700;
    letter-spacing: -0.2px;
    color: #fff;
    white-space: nowrap;
}

.site-nav a + a {
    margin-left: 50px;
}

.site-nav .nav-about {
    margin-left: 51px;
}

.site-nav .nav-employee {
    margin-left: 42px;
    font-size: 21.3px;
    color: #ffd700;
    text-shadow: 0 0 10px rgba(255, 215, 0, 0.6);
}

.site-nav .nav-company {
    margin-left: 45px;
}

.avatar {
    width: 62px;
    height: 62px;
    margin-left: 10.5px;
    border-radius: 50%;
    background-color: #ffd700;
    color: #2e8b57;
    font-size: 28px;
    font-weight: 700;
    line-height: 62px;
    text-align: center;
}

.page-body {
    height: 815px;
    padding: 9px 25px 0;
    display: flex;
    gap: 32px;
}

.sidebar {
    width: 313px;
    height: 807px;
    flex-shrink: 0;
    padding: 37px 25px 0;
    border-radius: 20px;
    background: linear-gradient(180deg, #2f3a4c 0%, #1a2b48 100%);
    box-shadow: 0 4px 20px rgba(0, 0, 0, 0.1);
}

.sidebar-title {
    height: 118px;
    padding: 20px 10px 0;
    border-radius: 12px;
    background: linear-gradient(135deg, #465163, #2d394c);
    color: #fff;
    font-size: 28px;
    line-height: 40px;
    text-align: center;
}

.sidebar-glow {
    width: 132px;
    height: 4px;
    margin: 8px auto 0;
    border-radius: 2px;
    background: linear-gradient(90deg, #3f4a5c, #ffd700, #3f4a5c);
    box-shadow: 0 0 10px rgba(255, 215, 0, 0.45);
}

.side-menu {
    list-style: none;
    margin: 25px 0 0;
    padding: 0;
    display: flex;
    flex-direction: column;
    gap: 12.6px;
}

.side-item {
    height: 67px;
    padding: 2px 0 0 24px;
    display: flex;
    align-items: center;
    border-radius: 12px;
    background-color: rgba(255, 255, 255, 0.1);
    color: #e2e8f0;
    font-size: 18.5px;
    font-weight: 600;
}

.side-item.active {
    background: linear-gradient(100deg, #ffd700, #d0ae04);
    color: #2d3748;
}

.side-icon {
    width: 28px;
    height: 28px;
}

.side-item span {
    margin-left: 23px;
}

.content-card {
    width: 870px;
    height: 830px;
    padding: 25px 25px 0 24px;
    border-radius: 20px;
    background-color: #fff;
    box-shadow: 0 4px 20px rgba(0, 0, 0, 0.06);
}

.content-head {
    display: flex;
    justify-content: space-between;
    align-items: flex-start;
    height: 90px;
}

.content-head h2 {
    margin: 3px 0 0;
    color: #2d3436;
    font-size: 27.5px;
    font-weight: 700;
}

.add-order {
    width: 134px;
    height: 49px;
    margin-top: 8px;
    border: none;
    border-radius: 6px;
    background-color: #333;
    color: #fff;
    font-family: inherit;
    font-size: 17px;
}

.filters {
    display: grid;
    grid-template-columns: 374px 106px 300px;
    column-gap: 20px;
    row-gap: 19px;
}

.field-branch {
    grid-column: 2 / 4;
}

.field-name {
    grid-column: 1 / 3;
}

.field label {
    display: block;
    margin-bottom: 4px;
    font-size: 17px;
    font-weight: 600;
    line-height: 26px;
    color: #2d3436;
}

.text-input {
    display: block;
    width: 100%;
    height: 46px;
    padding: 0 10px;
    border: 1px solid #e6e9ef;
    border-radius: 6px;
    background-color: #f8f9fa;
    color: #2d3436;
    font-family: inherit;
    font-size: 17px;
}

.text-input::placeholder {
    color: #757575;
}

.text-input.readonly {
    background-color: #e9ecef;
    border-color: #e9ecef;
}

.orders-table {
    width: 820px;
    margin-top: 25px;
    border-collapse: collapse;
    table-layout: fixed;
    font-size: 17px;
    color: #2d3436;
}

.c-id { width: 145px; }
.c-branch { width: 127px; }
.c-company { width: 110px; }
.c-product { width: 194px; }
.c-status { width: 104px; }
.c-date { width: 140px; }

.orders-table th {
    height: 79px;
    padding: 0 15px;
    background-color: #333;
    color: #fff;
    font-size: 17px;
    font-weight: 600;
    line-height: 24px;
    text-align: left;
}

.orders-table td {
    height: 79px;
    padding: 2px 15px 0;
    line-height: 24px;
    border-bottom: 1px solid #e4e7ec;
    white-space: nowrap;
}

.orders-table tbody tr:nth-child(even) td {
    background-color: #f8f9fa;
}

/* page scrollbar */
.page-scroll {
    width: 19px;
    background-color: #2b2b2e;
    display: flex;
    flex-direction: column;
    align-items: center;
    padding-top: 6px;
    padding-right: 3px;
}

.page-thumb {
    width: 11px;
    height: 535px;
    margin-top: 5px;
    border-radius: 6px;
    background-color: #a0a0a0;
}

.arrow-up,
.arrow-down {
    width: 0;
    height: 0;
    border-left: 6px solid transparent;
    border-right: 6px solid transparent;
}

.arrow-up {
    border-bottom: 8px solid #a0a0a0;
}

.arrow-down {
    margin-top: auto;
    margin-bottom: 5px;
    border-top: 8px solid #a0a0a0;
}

/* devtools */
.devtools {
    width: 636px;
    height: 919px;
    display: flex;
    flex-direction: column;
    background-color: #202024;
    border-left: 1px solid #55555a;
    color: #c7c7c7;
    font-size: 14px;
    overflow: hidden;
}

.dt-ic {
    width: 18px;
    height: 18px;
}

.dt-sep {
    width: 1px;
    height: 20px;
    background-color: #55555a;
    flex-shrink: 0;
}

.dt-tabs {
    height: 34px;
    padding-left: 11px;
    display: flex;
    align-items: center;
    border-bottom: 1px solid #55555a;
    flex-shrink: 0;
}

.dt-tabs .dt-ic + .dt-ic {
    margin-left: 17px;
}

.dt-tabs > .dt-sep {
    margin: 0 0 0 12px;
}

.dt-tab {
    height: 33px;
    line-height: 36px;
    margin-left: 28px;
    font-size: 14px;
    white-space: nowrap;
    position: relative;
}

.dt-tab.first {
    margin-left: 15px;
}

.dt-tab.selected {
    color: #c4c7ff;
    font-weight: 500;
}

.dt-tab.selected::after {
    content: "";
    position: absolute;
    left: -13px;
    right: -13px;
    bottom: 0;
    height: 3px;
    border-radius: 3px 3px 0 0;
    background-color: #c4c7ff;
}

.dt-more {
    width: 15px;
    height: 13px;
    margin-left: 18px;
}

.dt-tabs-right {
    margin-left: auto;
    padding-right: 16px;
    display: flex;
    align-items: center;
}

.dt-chat {
    width: 13px;
    height: 13px;
}

.dt-count {
    margin-left: 2px;
    margin-right: 15px;
}

.dt-tabs-right .gear {
    margin-left: 13px;
}

.dt-tabs .dt-ic.dots {
    width: 4px;
    margin-left: 24px;
}

.dt-tabs .dt-ic.close {
    width: 14px;
    height: 14px;
    margin-left: 25px;
}

.dt-row {
    display: flex;
    align-items: center;
    padding-left: 11px;
    flex-shrink: 0;
}

.dt-controls {
    height: 32px;
}

.dt-controls .dt-ic + .dt-ic {
    margin-left: 17px;
}

.dt-controls > .dt-sep {
    margin: 0 12px 0 13.5px;
}

.dt-controls > .dt-sep + .funnel {
    margin-left: 2px;
}

.dt-controls .funnel {
    width: 15px;
    height: 15px;
}

.dt-controls .funnel + .lens {
    margin-left: 18px;
}

.dt-check {
    display: flex;
    align-items: center;
    gap: 7px;
    white-space: nowrap;
}

.box {
    width: 15px;
    height: 15px;
    border: 1px solid #8a8a8e;
    border-radius: 2px;
    background-color: #3a3a40;
    display: block;
    flex-shrink: 0;
}

.box.checked {
    background-color: #8f96f5;
    border-color: #8f96f5;
}

.box svg {
    width: 13px;
    height: 13px;
}

.dt-select {
    width: 139px;
    height: 30px;
    margin-left: 6px;
    padding-left: 11px;
    border: 1px solid #75757a;
    border-radius: 4px;
    line-height: 28px;
    color: #dcdcdc;
    position: relative;
    flex-shrink: 0;
}

.caret {
    position: absolute;
    right: 12px;
    top: 11px;
    border-left: 5px solid transparent;
    border-right: 5px solid transparent;
    border-top: 6px solid #a8a8a8;
}

.dt-controls .sep-end {
    margin: 0 0 0 33px;
}

.dt-controls .sep-end + .gear {
    margin-left: 12px;
}

.dt-import {
    height: 33px;
    padding-left: 12px;
    border-bottom: 1px solid #55555a;
}

.dt-import > .dt-sep {
    margin: 0 14px 0 12px;
}

.dt-import .dt-ic + .dt-ic {
    margin-left: 18px;
}

.dt-filter {
    height: 36px;
    padding: 0 0 2px 6px;
    display: flex;
    align-items: center;
    flex-shrink: 0;
}

.filter-input {
    width: 407px;
    height: 25px;
    padding-left: 13px;
    display: flex;
    align-items: center;
    gap: 7px;
    border-radius: 13px;
    background-color: #3a3a40;
    color: #b8b8b8;
}

.filter-input svg {
    width: 13px;
    height: 13px;
}

.dt-filter .invert {
    margin-left: 15px;
}

.dt-filter > .dt-sep {
    margin-left: 13px;
}

.more-filters {
    margin-left: 23px;
    position: relative;
    padding-right: 18px;
    white-space: nowrap;
}

.caret.small {
    right: 0;
    top: 7px;
}

.chips {
    height: 57px;
    padding: 1px 0 0 4px;
    display: flex;
    flex-wrap: wrap;
    align-content: flex-start;
    align-items: center;
    column-gap: 5.5px;
    row-gap: 2px;
    border-bottom: 1px solid #55555a;
    flex-shrink: 0;
}

.chip {
    height: 26px;
    padding: 0;
    border: 1px solid #75757a;
    border-radius: 8px;
    color: #e0e0e0;
    font-size: 13px;
    font-weight: 500;
    line-height: 24px;
    text-align: center;
    white-space: nowrap;
}

.w28 { width: 28px; }
.w37 { width: 37px; }
.w39 { width: 39px; }
.w40 { width: 40px; }
.w42 { width: 42px; }
.w52 { width: 52px; }
.w56 { width: 56px; }
.w69 { width: 69px; }
.w81 { width: 81px; }

.chip.on {
    width: 31px;
    border-color: #3c3f6e;
    background-color: #3c3f6e;
    color: #e4e5ff;
}

.chip-sep {
    width: 1px;
    height: 20px;
    background-color: #55555a;
}

/* overview is a free canvas, marks sit on the time axis */
.overview {
    height: 101px;
    position: relative;
    border-bottom: 1px solid #55555a;
    flex-shrink: 0;
}

.grid-line {
    position: absolute;
    top: 0;
    bottom: 0;
    width: 1px;
    background-color: #55555a;
}

.grid-line em {
    position: absolute;
    right: 3px;
    top: 5px;
    font-size: 11.6px;
    font-style: normal;
    color: #dcdcdc;
    white-space: nowrap;
}

.g1 { left: 157px; }
.g2 { left: 315px; }
.g3 { left: 472px; }
.g4 { left: 630px; }

.mark {
    position: absolute;
    height: 3px;
}

.m-green { background-color: #34a853; }
.m-blue { background-color: #4285f4; }
.m-grey { background-color: #77777c; }

.m1 { left: 1px; width: 188px; top: 36px; }
.m2 { left: 189px; width: 13px; top: 36px; }
.m3 { left: 197px; width: 12px; top: 40px; }
.m4 { left: 211px; width: 12px; top: 40px; }
.m5 { left: 215px; width: 412px; top: 36px; }
.m6 { left: 627px; width: 8px; top: 36px; }

.v-line {
    position: absolute;
    top: 25px;
    bottom: 0;
    width: 2px;
}

.dcl { left: 222px; background-color: #6d8fd0; }
.load { left: 227px; background-color: #c97a70; }

.handle {
    position: absolute;
    top: 0;
    width: 5px;
    height: 24px;
    border: 1px solid #c4c7ff;
    background-color: #3a3a40;
}

.h-left { left: 0; border-radius: 0 3px 3px 0; }
.h-right { right: 0; border-radius: 3px 0 0 3px; }

.edge-line {
    position: absolute;
    left: 0;
    top: 0;
    bottom: 0;
    width: 1px;
    background-color: #c4c7ff;
}

.net-table {
    height: 343px;
    display: flex;
    flex-direction: column;
    flex-shrink: 0;
    font-size: 14px;
}

.net-row {
    display: grid;
    grid-template-columns: 235px 71px 71px 118px 72px 68px;
    height: 26.5px;
    line-height: 26px;
    flex-shrink: 0;
}

.net-row > span {
    padding: 0 4px 0 5px;
    border-right: 1px solid #55555a;
    white-space: nowrap;
    overflow: hidden;
    color: #dcdcdc;
}

.net-row > span:last-child {
    border-right: none;
}

.net-head {
    height: 34px;
    line-height: 33px;
    background-color: #26272c;
    border-bottom: 1px solid #55555a;
}

.net-row.light {
    background-color: #26272c;
}

.net-row.dark {
    background-color: #1c1c20;
}

.net-row.filler {
    flex: 1;
    background-color: #1c1c20;
}

.net-row .name {
    display: flex;
    align-items: center;
    gap: 6px;
    padding-left: 8px;
}

.name svg {
    width: 14px;
    height: 16px;
}

.net-row .muted {
    color: #8a8a8e;
}

.net-row .link {
    text-decoration: underline;
}

.net-row .num {
    text-align: right;
}

.dt-status {
    height: 35px;
    padding-bottom: 2px;
    display: flex;
    align-items: center;
    border-top: 1px solid #55555a;
    border-bottom: 1px solid #55555a;
    flex-shrink: 0;
    font-size: 13.8px;
    white-space: nowrap;
}

.dt-status span {
    padding: 0 12px;
    border-right: 1px solid #55555a;
    line-height: 20px;
    flex-shrink: 0;
}

.dt-status .dcl-text {
    padding: 0 0 0 10px;
    font-size: 13.9px;
    color: #8ab4f8;
    border: none;
}

.drawer-tabs {
    height: 33px;
    padding-left: 18px;
    display: flex;
    align-items: center;
    background-color: #3a3a40;
    border-bottom: 1px solid #55555a;
    flex-shrink: 0;
}

.dots-v {
    width: 4px;
    height: 16px;
}

.drawer-tab {
    height: 32px;
    line-height: 36px;
    margin-left: 26px;
    font-size: 14px;
    position: relative;
    display: flex;
    align-items: baseline;
}

.drawer-tab.selected {
    color: #c4c7ff;
    font-weight: 500;
}

.drawer-tab svg {
    width: 10px;
    height: 10px;
    margin-left: 5px;
    align-self: center;
}

.drawer-tab.selected::after {
    content: "";
    position: absolute;
    left: -13px;
    right: -11px;
    bottom: 0;
    height: 3px;
    border-radius: 3px 3px 0 0;
    background-color: #c4c7ff;
}

.drawer-close {
    width: 13px;
    height: 13px;
    margin-left: auto;
    margin-right: 14px;
}

.drawer-body {
    flex: 1;
    min-height: 0;
    display: flex;
    background-color: #3a3a40;
}

.whatsnew {
    flex: 1;
    overflow: hidden;
}

.wn-head {
    height: 40px;
    margin: 20px 0 0 25px;
    display: flex;
    align-items: center;
    gap: 12px;
}

.wn-head svg {
    width: 39px;
    height: 40px;
}

.wn-head span {
    color: #e8e8e8;
    font-size: 18.6px;
    font-weight: 600;
}

.wn-btn {
    display: block;
    width: 167px;
    height: 30px;
    margin: 20px 0 0 25px;
    padding: 0;
    border: none;
    border-radius: 15px;
    background-color: #c4c7ff;
    color: #22208a;
    font-family: inherit;
    font-size: 14px;
    font-weight: 500;
}

.wn-panel {
    height: 100px;
    margin-top: 25px;
    padding: 25px 0 0 25px;
    border-radius: 36px 36px 0 0;
    background-color: #1b1b1f;
}

.wn-card {
    width: 402px;
    height: 80px;
    display: flex;
    border-radius: 20px 20px 0 0;
    background-color: #2c3038;
    overflow: hidden;
}

.wn-thumb {
    width: 146px;
    flex-shrink: 0;
    background-color: #1a73e8;
    position: relative;
}

.wn-thumb svg {
    width: 146px;
    height: 60px;
}

.new-badge {
    position: absolute;
    left: 98px;
    top: 15px;
    width: 38px;
    height: 20px;
    border-radius: 4px;
    background-color: #e8f0fe;
    color: #1a73e8;
    font-size: 14px;
    font-weight: 700;
    line-height: 19px;
    text-align: center;
}

.wn-card-text {
    margin: 15px 0 0 15px;
    color: #e8e8e8;
    font-size: 13px;
    white-space: nowrap;
}

.drawer-scroll {
    width: 18px;
    display: flex;
    flex-direction: column;
    align-items: center;
    padding-top: 6px;
    background-color: #333338;
}

.drawer-thumb {
    width: 10px;
    height: 41px;
    margin-top: 6px;
    border-radius: 5px;
    background-color: #a0a0a0;
}

/* taskbar */
.taskbar {
    height: 60px;
    display: flex;
    align-items: center;
    background: linear-gradient(90deg, #3a2119 0%, #33281a 30%, #2c2c1d 55%, #2b2a1c 75%, #3a2018 100%);
    border-top: 1px solid #55504a;
    position: relative;
}

.weather {
    width: 36px;
    height: 38px;
    margin-left: 25px;
    position: relative;
}

.weather svg {
    width: 32px;
    height: 36px;
}

.weather-badge {
    position: absolute;
    left: 15px;
    top: -4px;
    width: 20px;
    height: 20px;
    border-radius: 50%;
    background-color: #ff9aa2;
    color: #222;
    font-size: 14px;
    line-height: 20px;
    text-align: center;
}

.task-center {
    margin-left: 224px;
    display: flex;
    align-items: center;
}

.task-slot {
    width: 55px;
    height: 50px;
    padding-top: 5px;
    display: flex;
    flex-direction: column;
    align-items: center;
    justify-content: center;
    gap: 3px;
    flex-shrink: 0;
}

.task-slot svg {
    width: 31px;
    height: 31px;
}

.task-slot.start {
    padding-top: 0;
}

.task-slot.start svg {
    width: 30px;
    height: 36px;
}

.dot,
.dot-off,
.dot-active {
    display: block;
    height: 4px;
    border-radius: 2px;
    font-style: normal;
}

.dot { width: 7px; background-color: #8f8f8f; }
.dot-off { width: 7px; }
.dot-active { width: 18px; background-color: #4cc2ff; }

.task-search {
    width: 275px;
    height: 40px;
    margin: 0 4px;
    padding: 0 8px 0 16px;
    display: flex;
    align-items: center;
    border-radius: 20px;
    background: linear-gradient(90deg, #5a4038, #4e4a3c);
    border: 1px solid #5e5a50;
    color: #e0e0e0;
    font-size: 17px;
}

.search-glass {
    width: 19px;
    height: 20px;
}

.task-search span {
    margin-left: 12px;
    flex-grow: 1;
}

.search-art {
    width: 56px;
    height: 34px;
}

.help-wrap,
.chrome-wrap {
    position: relative;
    width: 31px;
    height: 31px;
}

.help-badge {
    position: absolute;
    top: -6px;
    right: -6px;
    width: 20px;
    height: 20px;
    border-radius: 50%;
    background-color: #ffc107;
}

.profile {
    position: absolute;
    top: -8px;
    right: -7px;
    width: 20px;
    height: 20px;
    border-radius: 50%;
    color: #eee;
    font-size: 12px;
    font-weight: 600;
    line-height: 20px;
    text-align: center;
}

.p-pink { background-color: #b455c8; }
.p-purple { background-color: #6b2aa0; }
.p-brown { background-color: #57392f; }

.task-slot.active-app {
    width: 50px;
    margin: 0 2.5px;
    border-radius: 5px;
    background-color: rgba(255, 255, 255, 0.07);
}

.task-slot .brave-orb {
    position: absolute;
    top: -6px;
    right: -6px;
    width: 22px;
    height: 22px;
}

.tray {
    margin-left: auto;
    padding-right: 25px;
    display: flex;
    align-items: center;
}

.tray-chev {
    width: 14px;
    height: 9px;
}

.tray-cloud {
    width: 21px;
    height: 18px;
    margin-left: 21px;
}

.tray-lang {
    margin-left: 25px;
    margin-right: 23px;
    color: #eee;
    font-size: 14px;
    line-height: 24px;
    text-align: center;
}

.tray-ic {
    width: 20px;
    height: 18px;
    margin-right: 10px;
}

.tray-clock {
    margin-left: 11px;
    color: #eee;
    font-size: 14.5px;
    line-height: 24px;
    text-align: right;
}
```
